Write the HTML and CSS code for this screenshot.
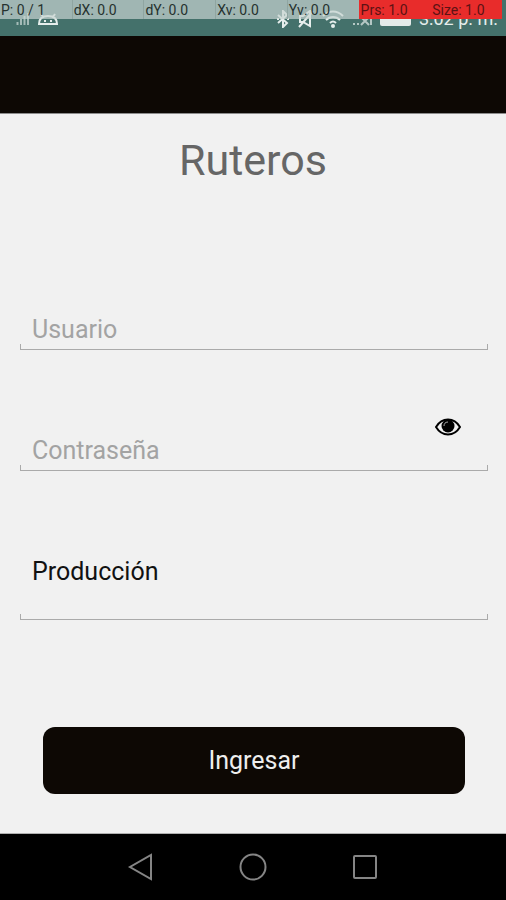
FILE: index.html
```html
<!DOCTYPE html>
<html lang="es">
<head>
<meta charset="utf-8">
<meta name="viewport" content="width=device-width, initial-scale=1">
<title>Ruteros</title>
<link rel="stylesheet" href="styles.css">
</head>
<body>
<header class="status">
  <div class="status-icons">
    <svg class="signal" viewBox="0 0 14 14" width="14" height="14"><path d="M1.500 13v-3M5 13V7M8.500 13V4M12 13V1"/></svg>
    <svg class="android" viewBox="0 0 20 12" width="20" height="12"><path d="M1 11C1 5 5 3 10 3s9 2 9 8zM5 4 3 1M15 4l2-3M6 8h2M12 8h2"/></svg>
    <span class="spacer"></span>
    <svg class="bluetooth" viewBox="0 0 14 18" width="14" height="18"><path d="m2 5 9 8-4 4V1l4 4-9 8M1 9h2M11 9h2"/></svg>
    <svg class="mute" viewBox="0 0 16 18" width="16" height="18"><path d="M2 6h3l7-5v15L5 12H2zM1 17 15 1"/></svg>
    <svg class="wifi" viewBox="0 0 22 18" width="22" height="18"><path d="M1 6c6-6 14-6 20 0M4 10c4-4 10-4 14 0M8 13c2-2 4-2 6 0"/><circle cx="11" cy="16" r="2"/></svg>
    <svg class="sim" viewBox="0 0 20 14" width="20" height="14"><path d="M1 12h2M5 12h2M9 5l8 8M17 5l-8 8M19 1v12"/></svg>
    <span class="battery"></span>
    <time class="clock">3:02 p. m.</time>
  </div>
  <div class="pointer">
    <span>P: 0 / 1</span><span>dX: 0.0</span><span>dY: 0.0</span><span>Xv: 0.0</span><span>Yv: 0.0</span><span class="hot">Prs: 1.0</span><span class="hot">Size: 1.0</span>
  </div>
</header>
<div class="appbar"></div>
<main class="login">
  <h1>Ruteros</h1>
  <form>
    <div class="field">
      <input type="text" placeholder="Usuario" aria-label="Usuario">
    </div>
    <div class="field">
      <input type="password" placeholder="Contraseña" aria-label="Contraseña">
      <button class="reveal" type="button" aria-label="Mostrar contraseña">
        <svg viewBox="0 0 26 18" width="26" height="18"><path class="lid" d="M1 9C7-1 19-1 25 9 19 19 7 19 1 9z"/><circle cx="13" cy="8" r="6.500"/><path class="glint" d="M9 8c0-2 1-4 4-4"/></svg>
      </button>
    </div>
    <div class="field tall">
      <select aria-label="Ambiente"><option>Producción</option></select>
    </div>
    <button class="submit" type="submit">Ingresar</button>
  </form>
</main>
<nav class="navbar">
  <button type="button" aria-label="Atrás"><svg viewBox="0 0 28 28" width="28" height="28"><path d="M24 2v24L3 14z"/></svg></button>
  <button type="button" aria-label="Inicio"><svg viewBox="0 0 28 28" width="28" height="28"><circle cx="14" cy="14" r="12.500"/></svg></button>
  <button type="button" aria-label="Recientes"><svg viewBox="0 0 28 28" width="28" height="28"><rect x="3" y="3" width="22" height="22" rx="1"/></svg></button>
</nav>
</body>
</html>
```
FILE: styles.css
```css
*,
*::after {
  box-sizing: border-box;
}

body {
  margin: 0;
  min-height: 100vh;
  display: flex;
  flex-direction: column;
  background: #f1f1f1;
  font-family: Roboto, sans-serif;
}

button,
input,
select {
  margin: 0;
  padding: 0;
  border: 0;
  background: none;
  font: inherit;
  color: inherit;
}

svg {
  display: block;
  flex: none;
  fill: none;
  stroke: currentColor;
  stroke-width: 2;
}

.status {
  position: relative;
  height: 36px;
  overflow: hidden;
  background: #44716b;
  color: #e6eeec;
}

.status-icons {
  display: flex;
  align-items: center;
  gap: 8px;
  height: 38px;
  padding: 0 8px 0 16px;
}

.spacer {
  flex: 1;
}

.signal {
  opacity: 0.6;
}

.wifi circle {
  fill: currentColor;
  stroke: none;
}

.sim {
  opacity: 0.7;
}

.battery {
  width: 31px;
  height: 14px;
  border-radius: 2px;
  background: #e4ebe9;
}

.clock {
  font-size: 18px;
  line-height: 38px;
  white-space: nowrap;
}

.pointer {
  position: absolute;
  top: 0;
  left: 0;
  right: 4px;
  height: 19px;
  display: grid;
  grid-template-columns: repeat(7, 1fr);
  font-size: 14px;
  line-height: 20px;
  color: #26322f;
}

.pointer span {
  height: 19px;
  padding-left: 1px;
  white-space: nowrap;
  background: rgba(200, 212, 209, 0.7);
}

.pointer span + span {
  border-left: 1px solid #8fa5a1;
}

.pointer span.hot {
  border-left-color: #e82c2b;
  background: #e82c2b;
  color: #5c1214;
}

.appbar {
  height: 78px;
  background: #0d0804;
  border-bottom: 1px solid #8c8c8c;
}

.login {
  flex: 1;
  border-bottom: 1px solid #b0b0b0;
}

h1 {
  margin: 0;
  padding-top: 20px;
  font-size: 43px;
  line-height: 52px;
  font-weight: 400;
  text-align: center;
  color: #666;
}

form {
  display: flex;
  flex-direction: column;
  padding: 108px 18px 39px 20px;
  font-size: 25px;
}

.field {
  position: relative;
  margin-bottom: 65px;
}

.field::after {
  content: "";
  display: block;
  height: 6px;
  border: solid #aaa;
  border-width: 0 1px 1px;
}

.field input,
.field select {
  display: block;
  width: 100%;
  height: 50px;
  padding: 20px 12px 0;
  outline: 0;
}

.field input::placeholder {
  color: #a3a3a3;
  opacity: 1;
}

.field select {
  appearance: none;
  color: #111;
}

.tall::after {
  margin-top: 28px;
}

.tall {
  margin-bottom: 107px;
}

.reveal {
  position: absolute;
  top: 3px;
  right: 27px;
  color: #000;
}

.reveal circle {
  fill: #000;
  stroke: none;
}

.reveal .glint {
  stroke: #aaa;
  stroke-width: 1;
}

.submit {
  height: 67px;
  margin: 0 23px;
  border-radius: 12px;
  background: #0d0804;
  color: #eee;
}

.navbar {
  height: 66px;
  display: flex;
  justify-content: center;
  align-items: center;
  gap: 84px;
  background: #000;
  color: #858585;
}
```
